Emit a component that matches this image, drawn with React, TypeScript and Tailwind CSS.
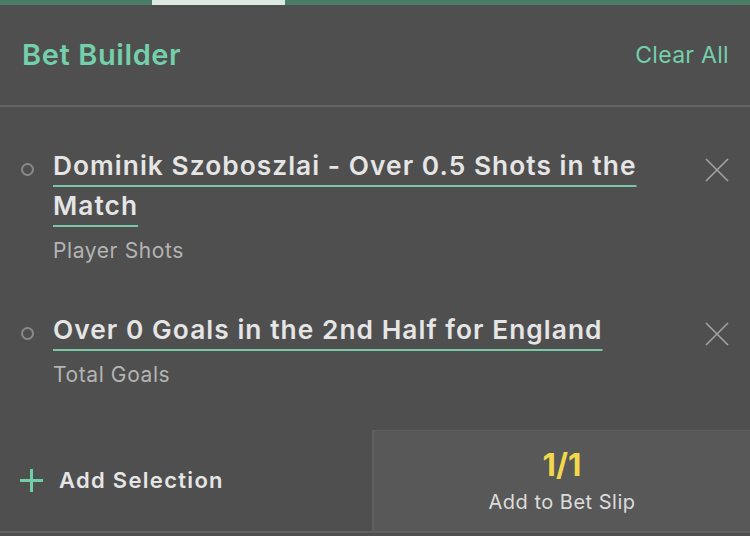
type Selection = {
  title: string;
  market: string;
};

const selections: Selection[] = [
  { title: 'Dominik Szoboszlai - Over 0.5 Shots in the Match', market: 'Player Shots' },
  { title: 'Over 0 Goals in the 2nd Half for England', market: 'Total Goals' },
];

function CloseIcon() {
  return (
    <svg width="26" height="26" viewBox="0 0 26 26" className="shrink-0">
      <path d="M2 2l22 22M24 2L2 24" stroke="#a3a3a3" strokeWidth="1.6" fill="none" />
    </svg>
  );
}

function PlusIcon() {
  return (
    <svg width="25" height="25" viewBox="0 0 25 25" className="shrink-0">
      <path d="M12.5 1v23M1 12.5h23" stroke="#6fd0a8" strokeWidth="3" fill="none" />
    </svg>
  );
}

function SelectionRow({ item }: { item: Selection }) {
  return (
    <div className="flex items-start pl-[21px] pr-[20px]">
      {/* bullet */}
      <div className="mt-[17px] w-[13px] h-[13px] rounded-full border-2 border-[#8a8a8a] shrink-0" />
      <div className="flex-1 ml-[19px] mr-[40px]">
        <p className="text-[26.3px] leading-[40px] font-semibold text-[#e5e5e5] tracking-[1.05px]">
          <span className="underline decoration-2 underline-offset-[10px] decoration-[#7cc6a8] [text-decoration-skip-ink:none]">
            {item.title}
          </span>
        </p>
        <p className="mt-[11px] text-[21px] leading-[28px] text-[#b4b4b4] tracking-[0.6px]">{item.market}</p>
      </div>
      <button className="mt-[11px] shrink-0">
        <CloseIcon />
      </button>
    </div>
  );
}

export default function App() {
  return (
    <div className="w-[750px] h-[536px] bg-[#4f4f4f] flex flex-col font-['Inter',sans-serif] overflow-hidden">
      {/* Tab indicator strip */}
      <div className="h-[5px] bg-[#4a7c66] flex shrink-0">
        <div className="ml-[152px] w-[133px] bg-[#dce9e3]" />
      </div>

      {/* Header */}
      <div className="h-[102px] shrink-0 flex items-center justify-between pl-[22px] pr-[21px] border-b-2 border-[#636363]">
        <h1 className="text-[29px] font-semibold text-[#74cfab] tracking-[0.6px]">Bet Builder</h1>
        <button className="text-[23px] text-[#74cfab] tracking-[0.3px]">Clear All</button>
      </div>

      {/* Selections */}
      <div className="flex-1 flex flex-col gap-[45px] pt-[39px]">
        {selections.map((s) => (
          <SelectionRow key={s.title} item={s} />
        ))}
      </div>

      {/* Footer actions */}
      <div className="h-[103px] shrink-0 flex border-b-2 border-[#606060]">
        <button className="flex-1 flex items-center gap-[15px] pl-[19px]">
          <PlusIcon />
          <span className="text-[22px] font-semibold text-[#e5e5e5] tracking-[1.3px]">Add Selection</span>
        </button>
        <button className="w-[378px] bg-[#585858] border-l-2 border-t border-[#5f5f5f] flex flex-col items-center justify-center">
          <span className="text-[31px] leading-[36px] font-bold text-[#f3d84b]">1/1</span>
          <span className="text-[20px] leading-[26px] text-[#dcdcdc] mt-[6px] tracking-[0.5px]">Add to Bet Slip</span>
        </button>
      </div>
      <div className="h-[3px] shrink-0" />
    </div>
  );
}
